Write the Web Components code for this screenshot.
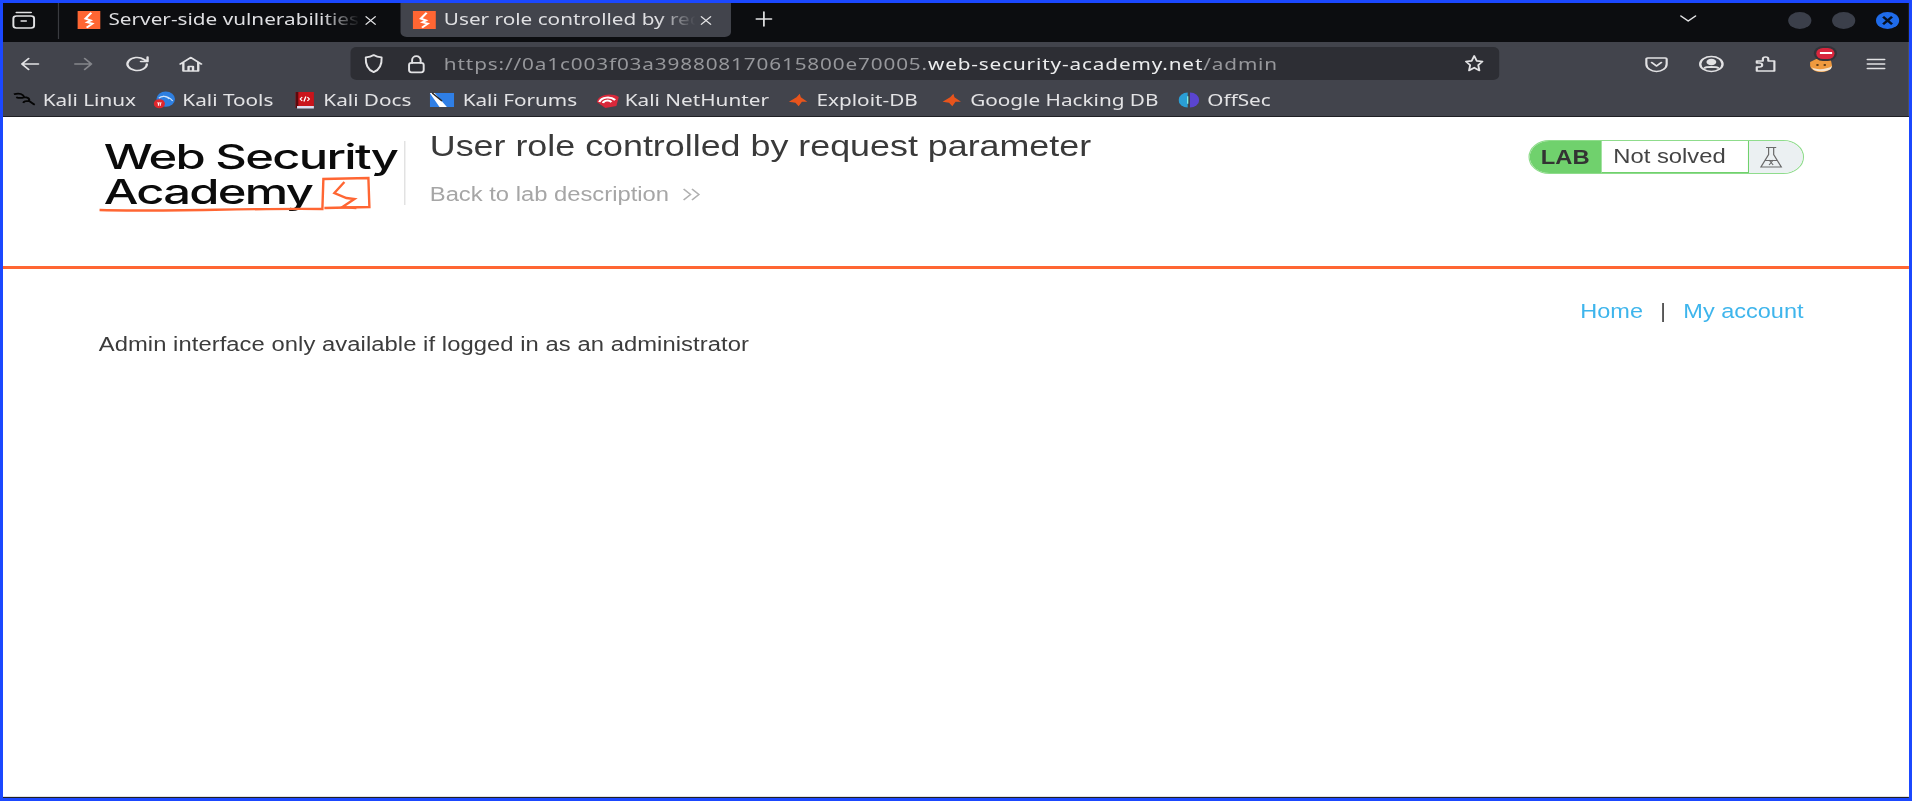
<!DOCTYPE html>
<html lang="en"><head><meta charset="utf-8"><title>User role controlled by request parameter</title>
<style>
html,body{margin:0;height:100%;background:#1b48ff;overflow:hidden}
body{padding:3px;box-sizing:border-box}
</style></head><body>
<browser-app>
  <tab-strip></tab-strip>
  <nav-bar></nav-bar>
  <bookmark-bar></bookmark-bar>
  <lab-page></lab-page>
</browser-app>
<script>
const BOLT='<svg viewBox="0 0 20 20" width="19" height="18" preserveAspectRatio="none"><rect width="20" height="20" fill="#ff6633"/><path d="M12 2 7 8.500 11.500 10.500 8.500 12.500 13 14 8 18.500" fill="none" stroke="#fff" stroke-width="2"/></svg>';
const X='<svg viewBox="0 0 12 12" width="11" height="13"><path d="M1.500 1.500l9 9m0-9l-9 9" stroke="#e4e4e6" stroke-width="1.300" fill="none"/></svg>';
function ic(inner,w=18,h=18,vb='0 0 18 18'){return `<svg viewBox="${vb}" width="${w}" height="${h}" preserveAspectRatio="none" fill="none" stroke="#e2e2e4" stroke-width="1.600" stroke-linecap="round" stroke-linejoin="round">${inner}</svg>`}

class BrowserApp extends HTMLElement{constructor(){super();this.attachShadow({mode:'open'}).innerHTML=`<style>
:host{display:flex;flex-direction:column;width:calc(1906px / 1.2194);height:795px;transform:scaleX(1.2194);transform-origin:0 0;background:#fff;overflow:hidden;font-family:"Noto Sans",sans-serif}
</style><slot></slot>`}}

class TabStrip extends HTMLElement{constructor(){super();this.attachShadow({mode:'open'}).innerHTML=`<style>
:host{display:flex;align-items:flex-start;height:39px;background:#0c0d10;color:#dfdfe2;font-size:17px;flex:none}
.arch{width:44.500px;display:flex;justify-content:center;padding:7px 11px 0 0;box-sizing:border-box}
.sep{width:1px;height:36px;background:#3a3b40;margin-right:15px}
.tab{display:flex;align-items:center;height:34px;box-sizing:border-box;padding-left:10px;border-radius:0 0 5px 5px;width:271px}
.t1{margin-right:4px;padding-left:0;width:261px}
.t2{background:#42444c}
.tt{flex:1;min-width:0;margin:0 0 3px 7px;white-space:nowrap;overflow:hidden;-webkit-mask-image:linear-gradient(90deg,#000 85%,transparent);mask-image:linear-gradient(90deg,#000 85%,transparent)}
.x{width:11px;margin:0 15px 0 3px;display:flex}
.plus{margin:7px 0 0 19px;display:flex}
.grow{flex:1}
.chev{margin:8px 74px 0 0;display:flex}
.wb{width:19px;height:17px;border-radius:50%;background:#3b3f4a;margin:9px 17px 0 0}
.wb.c{background:#1f6bea;margin-right:8px;display:flex;align-items:center;justify-content:center}
</style>
<div class="arch">${ic('<rect x="1.500" y="6" width="17" height="12" rx="2.500"/><path d="M4 2.500h12M8 11h4"/>',20,20,'0 0 20 20')}</div><div class="sep"></div>
<div class="tab t1">${BOLT}<span class="tt">Server-side vulnerabilities</span><span class="x">${X}</span></div>
<div class="tab t2">${BOLT}<span class="tt">User role controlled by request parameter</span><span class="x">${X}</span></div>
<span class="plus">${ic('<path d="M9 2v14M2 9h14"/>',16,18)}</span><span class="grow"></span>
<span class="chev">${ic('<path d="M2 5l6 5 6-5" stroke-width="1.300"/>',16,14,'0 0 16 14')}</span>
<span class="wb"></span><span class="wb"></span><span class="wb c"><svg viewBox="0 0 12 12" width="11" height="11"><path d="M2 2l8 8m0-8l-8 8" stroke="#06101f" stroke-width="2.400"/></svg></span>`}}

class NavBar extends HTMLElement{constructor(){super();this.attachShadow({mode:'open'}).innerHTML=`<style>
:host{display:flex;align-items:center;height:43px;background:#42444c;flex:none;box-sizing:border-box;padding:5px 0;font-size:17px}
.b{width:44px;display:flex;justify-content:center;flex:none}
.url{flex:none;width:942px;height:33px;margin-left:108.500px;background:#2d2e34;border-radius:5px;display:flex;align-items:center;padding:0 12px 0 10px;box-sizing:border-box;color:#96979b;letter-spacing:.7px;white-space:nowrap}
.url b{font-weight:400;color:#ecedee}
.u{margin-right:17px;display:flex}
.sp{flex:1}
.r{width:44.800px;display:flex;justify-content:center;flex:none;position:relative}
.badge{position:absolute;top:-7px;left:19px;width:15px;height:11px;border-radius:6px;background:#d7263d;display:flex;align-items:center;justify-content:center;box-shadow:0 0 0 2px #33343a}
.badge i{display:block;width:10px;height:2px;background:#fff}
</style>
<span class="b">${ic('<path d="M16 9H2.500M8 3.500L2.500 9 8 14.500"/>')}</span>
<span class="b">${ic('<path d="M2 9h13.500M10 3.500L15.500 9 10 14.500" stroke="#85868b"/>')}</span>
<span class="b">${ic('<path d="M15.500 9a6.500 6.500 0 1 1-2-4.700L16 6.500M16 2v4.500h-4.500"/>',22)}</span>
<span class="b">${ic('<path d="M2 9l7-6.500L16 9M4 7.500V16h10V7.500M7.500 16v-4.500h3V16"/>',22)}</span>
<div class="url"><span class="u">${ic('<path d="M9 1.800c2 1.400 4 1.900 6.500 2C15.800 10 13.500 14.500 9 16.400 4.500 14.500 2.200 10 2.500 3.800c2.500-.1 4.500-.6 6.500-2z"/>',18,21)}</span><span class="u" style="margin-right:14px">${ic('<rect x="3" y="8" width="12" height="8.500" rx="2"/><path d="M5.500 8V5.500a3.500 3.500 0 0 1 7 0V8"/>',18,20)}</span><span>https://0a1c003f03a398808170615800e70005.<b>web-security-academy.net</b>/admin</span><span class="sp"></span>${ic('<path d="M9 1.800l2.200 4.700 5 .6-3.700 3.500 1 5L9 13l-4.500 2.600 1-5L1.800 7.100l5-.6z"/>',17,19)}</div>
<span class="sp"></span>
<span class="r">${ic('<path d="M2.500 3h13a1 1 0 0 1 1 1v5a7.500 7.500 0 0 1-15 0V4a1 1 0 0 1 1-1zM5.500 7.500L9 11l3.500-3.500"/>',20)}</span>
<span class="r">${ic('<circle cx="9" cy="9" r="7.500"/><circle cx="9" cy="7" r="2.500" fill="#e2e2e4"/><path d="M4.500 13c1-1.500 8-1.500 9 0" fill="#e2e2e4"/>',22)}</span>
<span class="r">${ic('<path d="M2 6h4.500V4a2 2 0 0 1 4 0v2H15v4.500h0V16H2v-4h2a2 2 0 0 0 0-4H2z"/>',20)}</span>
<span class="r"><svg viewBox="0 0 20 18" width="20" height="18"><path d="M1 7l5-3h7l5 1 1 6c-1 4-5 6-9 6s-8-2-9-6z" fill="#ef9a3f"/><path d="M2 12c3 3 12 3 17-1l-1 3c-3 3-11 3-14 1z" fill="#f3e3cf"/><circle cx="7" cy="10" r="1.100" fill="#5a3a18"/><circle cx="13" cy="10" r="1.100" fill="#5a3a18"/></svg><span class="badge"><i></i></span></span>
<span class="r" style="margin-right:5px">${ic('<path d="M2 4.500h14M2 9h14M2 13.500h14"/>')}</span>`}}

const ICONS={
 linux:'<svg viewBox="0 0 20 18" width="19" height="18"><path d="M1 3c5-2 8 0 9 3 2 0 5 1 4 4 2 1 3 3 5 4M10 6C8 7 5 7 3 6M14 10c-2 0-4 0-5 2" fill="none" stroke="#050505" stroke-width="1.800"/></svg>',
 tools:'<svg viewBox="0 0 20 18" width="19" height="18"><circle cx="11" cy="8" r="8" fill="#2e7fe0"/><path d="M5 7c3-3 7-2 9 1M9 5c3 0 6 2 8 5" stroke="#cfe4fb" stroke-width="1.100" fill="none"/><circle cx="5.500" cy="13" r="4.800" fill="#e0262c"/><path d="M3.500 12h4M4.700 12v3M6.300 12v3" stroke="#fff" stroke-width=".9"/></svg>',
 docs:'<svg viewBox="0 0 16 18" width="17" height="18" preserveAspectRatio="none"><rect x="1" y="1" width="14" height="15" fill="#c9141b"/><rect x="1" y="1" width="2" height="16" fill="#5a0a0e"/><rect x="2" y="15" width="13" height="2.500" fill="#dde"/><path d="M6 6L4.500 8 6 10M10 6l1.500 2L10 10M8.800 5.500L7.300 10.500" stroke="#fff" fill="none" stroke-width="1"/></svg>',
 forums:'<svg viewBox="0 0 20 18" width="20" height="18"><rect y="2" width="20" height="14" fill="#2f7fe6"/><path d="M0 2l4 0 10 14H8z" fill="#fff"/><path d="M2 2l8 8" stroke="#222" stroke-width="1.200"/></svg>',
 hunter:'<svg viewBox="0 0 20 18" width="20" height="18"><path d="M1 11C2 4 12 1 19 6l-2 9-9 2z" fill="#d8283a"/><path d="M3 11c2-5 9-6 13-2M6 12c1-3 5-3 7-1" stroke="#fff" stroke-width="2" fill="none"/></svg>',
 edb:'<svg viewBox="0 0 20 18" width="19" height="16"><path d="M1 11L8 6l3-4 1 4 6 5-5 0-3 5-3-4z" fill="#e8541c"/></svg>',
 off:'<svg viewBox="0 0 18 18" width="17" height="18"><path d="M8 1a8 8 0 0 0 0 16z" fill="#2a9fd6"/><path d="M10 1a8 8 0 0 1 0 16z" fill="#5a45d0"/><path d="M8 5v8" stroke="#8fe" stroke-width="1"/></svg>'};
class BookmarkBar extends HTMLElement{constructor(){super();
 const items=[['linux','Kali Linux',7.500,6],['tools','Kali Tools',14,5],['docs','Kali Docs',17,7],['forums','Kali Forums',15,7],['hunter','Kali NetHunter',15,4],['edb','Exploit-DB',15,5],['edb','Google Hacking DB',19,5],['off','OffSec',16,7]];
 this.attachShadow({mode:'open'}).innerHTML=`<style>
:host{display:flex;align-items:center;height:32px;background:#42444c;border-bottom:1px solid #1f2024;box-sizing:border-box;flex:none;padding-bottom:2px;color:#e3e3e5;font-size:17px;white-space:nowrap}
.i{display:flex;align-items:center;flex:none}
</style>`+items.map(([k,t,m,g])=>`<span class="i" style="margin-left:${m}px;gap:${g}px">${ICONS[k]}<span>${t}</span></span>`).join('')}}

class LabBadge extends HTMLElement{constructor(){super();this.attachShadow({mode:'open'}).innerHTML=`<style>
:host{display:flex;width:226px;height:34px;box-sizing:border-box;border:1px solid #8fdc8c;border-radius:17px;overflow:hidden;font-size:19.500px;color:#333;flex:none}
.lab{width:59px;background:#70d16d;font-weight:700;display:flex;align-items:center;justify-content:center;flex:none}
.st{flex:1;display:flex;align-items:center;padding-left:10px;border-right:1px solid #70d16d;border-bottom:1px solid #70d16d;color:#444}
.ic{width:44px;background:#ebf0f2;display:flex;align-items:center;justify-content:center;flex:none;box-sizing:border-box;padding-right:7px}
</style><span class="lab">LAB</span><span class="st">Not solved</span><span class="ic"><svg viewBox="0 0 24 24" width="20" height="24" preserveAspectRatio="none" fill="none" stroke="#6a6a6a" stroke-width="1.200"><path d="M7 2.500h10M9.500 2.500v7L2 22h20L14.500 9.500v-7M6 15.500h12M10 15l4 5m0-5l-4 5"/></svg></span>`}}

class LabPage extends HTMLElement{constructor(){super();this.attachShadow({mode:'open'}).innerHTML=`<style>
:host{display:flex;flex-direction:column;flex:1;min-height:0;background:#fff;color:#3c3c3c;font-family:"Liberation Sans",Arial,sans-serif;font-size:19.500px;box-sizing:border-box;border-bottom:1px solid #1f2024}
.hd{display:flex;height:149px;padding:0 86.500px 0 79px;border-bottom:3px solid #ff6633;flex:none}
.logo{position:relative;width:249.500px;height:75px;margin-top:22px;flex:none;font-family:Inter,sans-serif;font-weight:500;color:#0b0b0b;font-size:34px;line-height:35px;letter-spacing:-1.200px}
.logo div{padding-left:3px;transform:scaleX(1.18);transform-origin:0 50%;white-space:nowrap}
.logo svg{position:absolute;left:0;top:0}
.dv{width:1px;height:64px;background:#dcdcdc;margin-top:24px;flex:none}
.tt{margin-left:20.500px;flex:1}
h1{font-size:29.400px;font-weight:400;margin:0;line-height:30px;padding-top:14px;color:#3a3a3a}
.bk{margin-top:22px;color:#a6a6a6;display:flex;align-items:center;gap:11px;line-height:22px}
lab-badge{margin-top:23px}
.nv{display:flex;justify-content:flex-end;align-items:center;height:22px;margin-top:32px;padding-right:86.500px;font-size:19.300px}
.nv a{color:#3eb5ec;text-decoration:none}.nv i{font-style:normal;margin:0 14px;color:#555}
.tx{margin:10px 0 0 78.500px;line-height:22px;letter-spacing:.05px}
.ft{margin-top:auto;height:3px;border-bottom:1px solid #e2e2e2}
</style>
<div class="hd">
 <div class="logo"><div>Web Security</div><div>Academy</div>
  <svg viewBox="100 139 306 75" width="251" height="75" preserveAspectRatio="none" fill="none" stroke="#ff6633" stroke-width="2.400"><path d="M100 210c60 2 150-2 223-1l1-30 45-1 1 29-45 1"/><path d="M345 182l-10 11 12 5 8 1-12 8 14 1"/></svg></div>
 <div class="dv"></div>
 <div class="tt"><h1>User role controlled by request parameter</h1>
  <div class="bk"><span>Back to lab description</span><svg viewBox="0 0 14 12" width="16" height="13" preserveAspectRatio="none" fill="none" stroke="#b0b0b0" stroke-width="1.200"><path d="M1 1l5 5-5 5M7 1l5 5-5 5"/></svg></div></div>
 <lab-badge></lab-badge>
</div>
<div class="nv"><a>Home</a><i>|</i><a>My account</a></div>
<div class="tx">Admin interface only available if logged in as an administrator</div>
<div class="ft"></div>`}}
customElements.define('browser-app',BrowserApp);
customElements.define('tab-strip',TabStrip);
customElements.define('nav-bar',NavBar);
customElements.define('bookmark-bar',BookmarkBar);
customElements.define('lab-badge',LabBadge);
customElements.define('lab-page',LabPage);
</script></body></html>
